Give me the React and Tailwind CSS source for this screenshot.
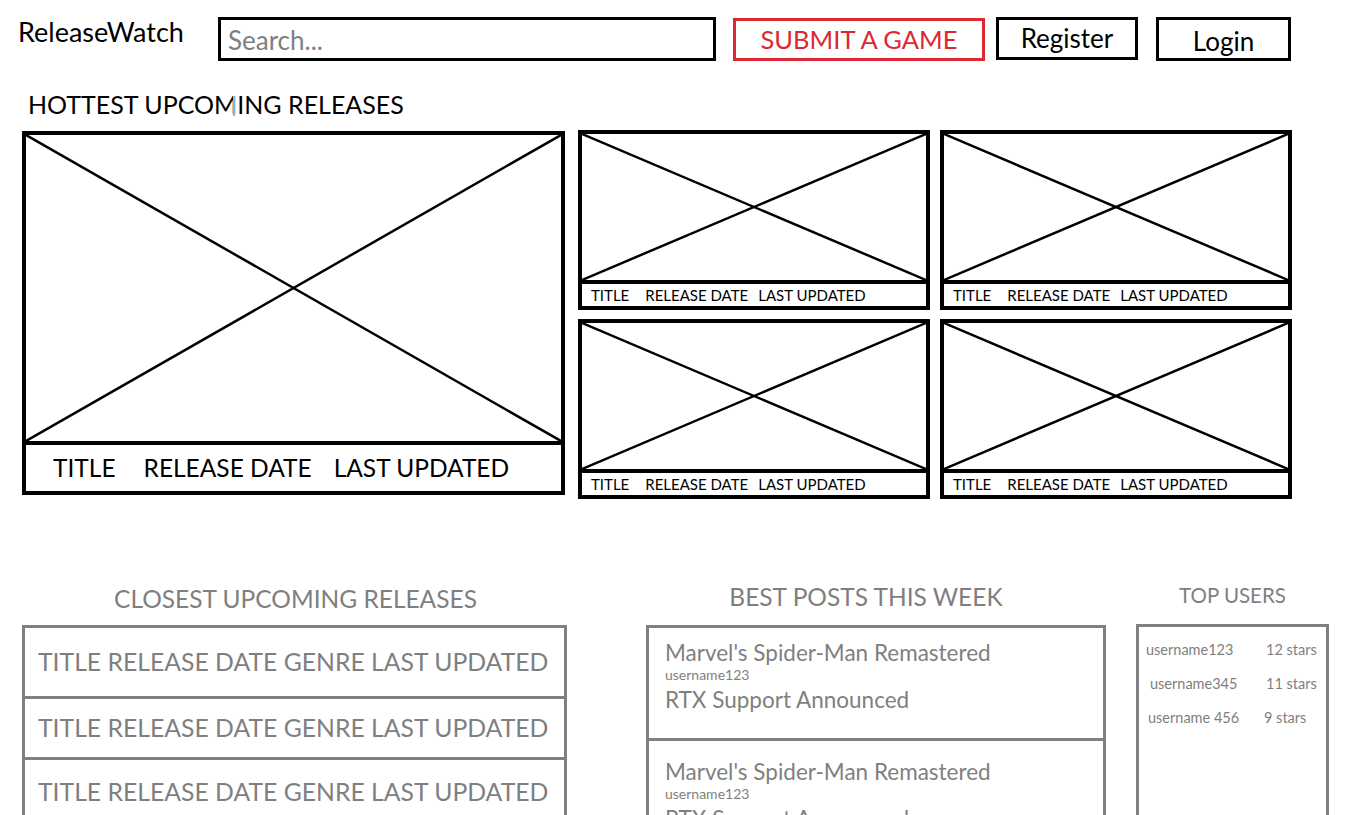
const font = { fontFamily: "Lato, 'Open Sans', sans-serif" };

function Cross({ h }) {
  return (
    <svg className={"w-full block " + h} viewBox="0 0 100 100" preserveAspectRatio="none">
      <line x1="0" y1="0" x2="100" y2="100" stroke="#000" strokeWidth="2.5" vectorEffect="non-scaling-stroke" />
      <line x1="100" y1="0" x2="0" y2="100" stroke="#000" strokeWidth="2.5" vectorEffect="non-scaling-stroke" />
    </svg>
  );
}

function SmallCard() {
  return (
    <div className="w-[352px] h-[180px] border-4 border-black flex flex-col">
      <Cross h="h-[146px]" />
      <div className="flex-1 border-t-4 border-black flex items-center pl-[9px] text-[15px] text-black leading-none">
        <span>TITLE</span>
        <span className="ml-[16px]">RELEASE DATE</span>
        <span className="ml-[10px]">LAST UPDATED</span>
      </div>
    </div>
  );
}

function PostRow({ last }) {
  return (
    <div className={"px-[16px] " + (last ? "pt-[18px] h-[80px]" : "pt-[12px] h-[113px] border-b-[3px] border-[#7f7f7f]")}>
      <div className="text-[22.5px] leading-[26px]">Marvel's Spider-Man Remastered</div>
      <div className="text-[14px] leading-[16px] mt-[1px]">username123</div>
      <div className="text-[22.5px] leading-[30px] mt-[2px]">RTX Support Announced</div>
    </div>
  );
}

export default function App() {
  return (
    <div className="w-[1359px] h-[815px] overflow-hidden bg-white text-black" style={font}>
      {/* Nav */}
      <div className="flex items-start pt-[17px]">
        <div className="ml-[18px] w-[200px] text-[27px] leading-[28px] mt-[1px]">ReleaseWatch</div>
        <div className="w-[498px] h-[44px] border-[3px] border-black flex items-center pl-[7px] pt-[2px] text-[26px] text-[#7f7f7f]">
          Search...
        </div>
        <div className="ml-[17px] mt-[1px] w-[252px] h-[43px] border-[3px] border-[#dc2832] flex items-center justify-center text-[25.5px] text-[#dc2832]">
          SUBMIT A GAME
        </div>
        <div className="ml-[11px] w-[142px] h-[43px] border-[3px] border-black flex items-center justify-center text-[26px]">
          Register
        </div>
        <div className="ml-[18px] w-[135px] h-[44px] border-[3px] border-black flex items-center justify-center pt-[4px] text-[26px]">
          Login
        </div>
      </div>

      {/* Hottest */}
      <div className="ml-[28px] mt-[29px] text-[25px] leading-[28px] relative">
        HOTTEST UPCOMING RELEASES
        <span className="absolute left-[205px] top-[6px] w-[2px] h-[20px] bg-[#7ab6e6]"></span>
      </div>
      <div className="flex ml-[22px] mt-[13px]">
        <div className="w-[543px] h-[364px] border-[4px] border-black flex flex-col">
          <Cross h="h-[306px]" />
          <div className="flex-1 border-t-4 border-black flex items-center pl-[27px] text-[24.5px] leading-none">
            <span>TITLE</span>
            <span className="ml-[28px]">RELEASE DATE</span>
            <span className="ml-[22px]">LAST UPDATED</span>
          </div>
        </div>
        <div className="ml-[13px] -mt-[1px] grid grid-cols-2 gap-x-[10px] gap-y-[9px] h-fit">
          <SmallCard />
          <SmallCard />
          <SmallCard />
          <SmallCard />
        </div>
      </div>

      {/* Lower section */}
      <div className="flex items-start mt-[85px] text-[#7f7f7f]">
        <div className="ml-[22px] w-[545px]">
          <div className="text-center text-[24.5px] leading-[30px] pl-[2px]">CLOSEST UPCOMING RELEASES</div>
          <div className="mt-[11px] border-[3px] border-[#7f7f7f] border-b-0">
            <div className="h-[71px] border-b-[3px] border-[#7f7f7f] flex items-center pl-[13px] text-[24.75px]">
              TITLE RELEASE DATE GENRE LAST UPDATED
            </div>
            <div className="h-[61px] border-b-[3px] border-[#7f7f7f] flex items-center pl-[13px] text-[24.75px]">
              TITLE RELEASE DATE GENRE LAST UPDATED
            </div>
            <div className="h-[64px] flex items-center pl-[13px] text-[24.75px]">
              TITLE RELEASE DATE GENRE LAST UPDATED
            </div>
          </div>
        </div>

        <div className="ml-[79px] w-[460px]">
          <div className="text-center text-[24.5px] leading-[30px] -mt-[2px] pr-[20px]">BEST POSTS THIS WEEK</div>
          <div className="mt-[13px] border-[3px] border-[#7f7f7f] border-b-0">
            <PostRow />
            <PostRow last />
          </div>
        </div>

        <div className="ml-[30px] w-[193px]">
          <div className="text-center text-[20.5px] leading-[26px] -mt-[2px]">TOP USERS</div>
          <div className="mt-[16px] h-[200px] border-[3px] border-[#7f7f7f] border-b-0 pt-[12px] text-[14.5px]">
            <div className="flex h-[34px]">
              <span className="ml-[7px] w-[120px]">username123</span>
              <span>12 stars</span>
            </div>
            <div className="flex h-[34px]">
              <span className="ml-[11px] w-[116px]">username345</span>
              <span>11 stars</span>
            </div>
            <div className="flex h-[34px]">
              <span className="ml-[9px] w-[116px]">username 456</span>
              <span>9 stars</span>
            </div>
          </div>
        </div>
      </div>
    </div>
  );
}
